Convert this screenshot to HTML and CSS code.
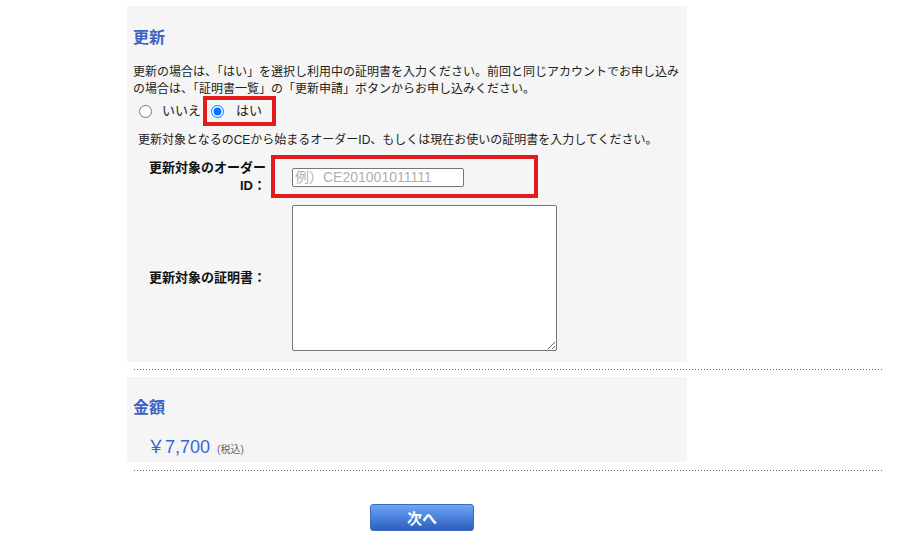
FILE: index.html
```html
<!DOCTYPE html>
<html lang="ja">
<head>
<meta charset="utf-8">
<title>更新</title>
<link rel="stylesheet" href="styles.css">
</head>
<body>
<div class="page">
  <section class="panel panel-renew">
    <h2 class="heading">更新</h2>
    <p class="intro">更新の場合は、「はい」を選択し利用中の証明書を入力ください。前回と同じアカウントでお申し込みの場合は、「証明書一覧」の「更新申請」ボタンからお申し込みください。</p>
    <div class="choice">
      <input type="radio" name="renew" id="r-no" class="radio">
      <label for="r-no" class="choice-label">いいえ</label>
      <input type="radio" name="renew" id="r-yes" class="radio radio-yes" checked>
      <label for="r-yes" class="choice-label">はい</label>
      <span class="mark mark-yes"></span>
    </div>
    <p class="desc">更新対象となるのCEから始まるオーダーID、もしくは現在お使いの証明書を入力してください。</p>
    <div class="row row-id">
      <label class="row-label" for="order-id">更新対象のオーダーID：</label>
      <div class="row-field">
        <input type="text" id="order-id" class="text-input" placeholder="例）CE201001011111">
      </div>
      <span class="mark mark-id"></span>
    </div>
    <div class="row row-cert">
      <label class="row-label" for="cert">更新対象の証明書：</label>
      <div class="row-field">
        <textarea id="cert" class="cert-area"></textarea>
      </div>
    </div>
  </section>
  <div class="rule"></div>
  <section class="panel panel-price">
    <h2 class="heading">金額</h2>
    <div class="price"><span class="amount">￥7,700</span><span class="tax">(税込)</span></div>
  </section>
  <div class="rule rule-bottom"></div>
  <div class="actions">
    <button type="button" class="next-btn">次へ</button>
  </div>
</div>
</body>
</html>
```
FILE: styles.css
```css
html, body {
  margin: 0;
  padding: 0;
  background: #fff;
}
body {
  font-family: "Liberation Sans", "Noto Sans CJK JP", sans-serif;
  color: #222;
  font-size: 12px;
}
.page {
  padding: 6px 0 0 127px;
}
.panel {
  width: 560px;
  box-sizing: border-box;
  background: #f5f5f5;
  padding-left: 6px;
}
.panel-renew {
  padding-top: 22px;
  padding-bottom: 11px;
}
.heading {
  margin: 0;
  font-size: 16px;
  line-height: 20px;
  font-weight: bold;
  color: #3a62c4;
}
.intro {
  margin: 16px 0 0;
  font-size: 12px;
  line-height: 17px;
  color: #222;
}
.choice {
  position: relative;
  display: flex;
  align-items: center;
  height: 18px;
  margin-top: 4px;
  padding-left: 6px;
}
.radio {
  width: 13px;
  height: 13px;
  margin: 0 10px 0 0;
}
.radio-yes {
  margin-left: 10px;
  margin-right: 12px;
}
.choice-label {
  font-size: 13px;
  line-height: 18px;
  color: #222;
}
.mark {
  position: absolute;
  border: 4px solid #e21c1c;
  box-sizing: border-box;
}
.mark-yes {
  left: 70px;
  top: -6px;
  width: 73px;
  height: 30px;
}
.desc {
  margin: 11px 0 0 5px;
  font-size: 12px;
  line-height: 18px;
  color: #222;
}
.row {
  position: relative;
  display: flex;
  align-items: center;
}
.row-id {
  margin-top: 10px;
}
.row-cert {
  margin-top: 10px;
}
.row-label {
  width: 133px;
  flex: none;
  text-align: right;
  font-size: 13px;
  line-height: 18px;
  font-weight: bold;
  color: #111;
}
.row-field {
  margin-left: 26px;
  display: flex;
}
.text-input {
  width: 172px;
  height: 19px;
  box-sizing: border-box;
  border: 1px solid #767676;
  border-radius: 2px;
  padding: 0 2px;
  font-family: "Liberation Sans", "Noto Sans CJK JP", sans-serif;
  font-size: 14px;
  background: #fff;
}
.text-input::placeholder {
  color: #b0b0b0;
}
.mark-id {
  left: 138px;
  top: -4px;
  width: 267px;
  height: 43px;
}
.cert-area {
  display: block;
  width: 265px;
  height: 146px;
  box-sizing: border-box;
  border: 1px solid #767676;
  border-radius: 2px;
  margin: 0;
  background: #fff;
}
.rule {
  width: 748px;
  height: 1px;
  margin: 7px 0 7px 7px;
  background-image: repeating-linear-gradient(to right, #666 0 1px, transparent 1px 3px);
}
.rule-bottom {
  margin-top: 8px;
}
.panel-price {
  height: 85px;
  padding-top: 21px;
}
.price {
  margin-top: 17px;
  padding-left: 14px;
  display: flex;
  align-items: baseline;
  line-height: 24px;
}
.amount {
  font-size: 18px;
  color: #3467d2;
  font-family: "Liberation Sans", "Noto Sans CJK JP", sans-serif;
}
.tax {
  margin-left: 7px;
  font-size: 10px;
  color: #666;
}
.actions {
  margin: 33px 0 0 243px;
}
.next-btn {
  display: block;
  width: 104px;
  height: 27px;
  padding: 0;
  border: 1px solid #3a6cc4;
  border-radius: 3px;
  background: linear-gradient(to bottom, #6ea5f2 0%, #4a82de 50%, #2e5fb8 100%);
  color: #fff;
  font-family: "Noto Sans CJK JP", sans-serif;
  font-size: 15px;
  font-weight: bold;
  line-height: 25px;
}
```
